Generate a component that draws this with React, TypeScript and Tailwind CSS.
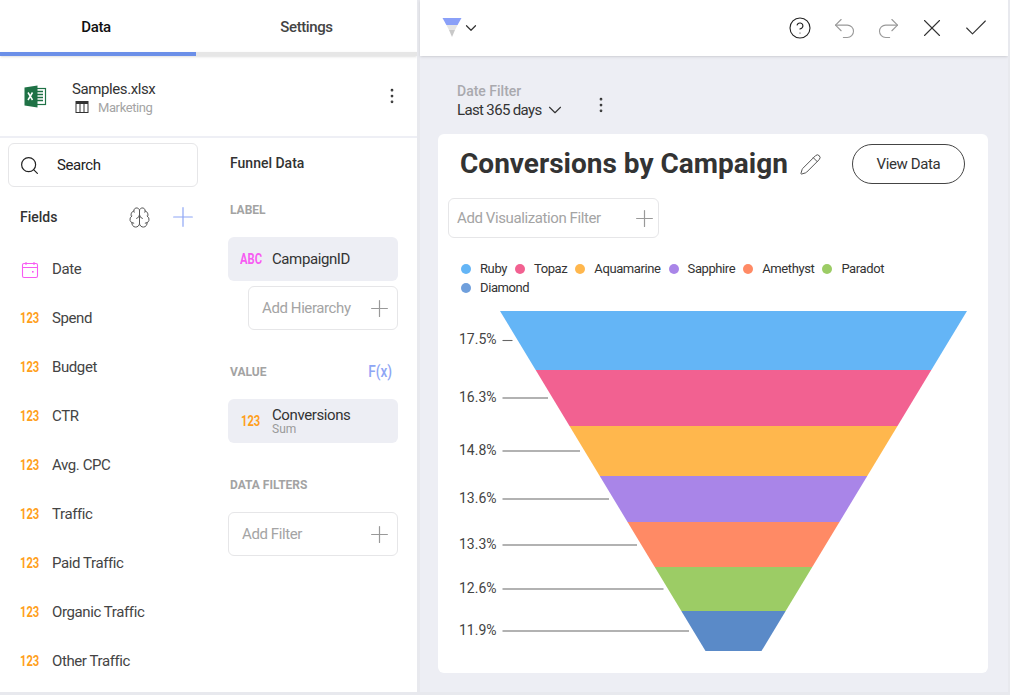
import React from "react";
import { Brain, Check, ChevronDown, CircleHelp, EllipsisVertical, Pencil, Plus, Redo2, Search, Undo2, X } from "lucide-react";

const fields = ["Spend", "Budget", "CTR", "Avg. CPC", "Traffic", "Paid Traffic", "Organic Traffic", "Other Traffic"];

const legend = [
  { name: "Ruby", color: "bg-[#64b5f6]" },
  { name: "Topaz", color: "bg-[#f26191]" },
  { name: "Aquamarine", color: "bg-[#ffb74d]" },
  { name: "Sapphire", color: "bg-[#a985e8]" },
  { name: "Amethyst", color: "bg-[#ff8a65]" },
  { name: "Paradot", color: "bg-[#9ccc65]" },
  { name: "Diamond", color: "bg-[#6f9fdc]" },
];

// chart coords are relative to the card (438,300)
const centerX = 295.5;
const slices = [
  { top: 11, bottom: 70, color: "#64b5f6", label: "17.5%", y: 40.5, end: 74.5 },
  { top: 70, bottom: 126, color: "#f26191", label: "16.3%", y: 98, end: 110 },
  { top: 126, bottom: 176, color: "#ffb74d", label: "14.8%", y: 151, end: 142 },
  { top: 176, bottom: 222, color: "#a985e8", label: "13.6%", y: 199, end: 171 },
  { top: 222, bottom: 267, color: "#ff8a65", label: "13.3%", y: 245, end: 199 },
  { top: 267, bottom: 311, color: "#9ccc65", label: "12.6%", y: 289, end: 225.5 },
  { top: 311, bottom: 351, color: "#5a8ac8", label: "11.9%", y: 331, end: 251 },
];
const halfAt = (y: number) => 233.5 - ((y - 11) * 205.5) / 340;

function Funnel() {
  return (
    <svg width="550" height="370" className="block" style={{ fontFamily: "Roboto, sans-serif" }}>
      {slices.map((s) => (
        <polygon
          key={s.label}
          fill={s.color}
          points={`${centerX - halfAt(s.top)},${s.top} ${centerX + halfAt(s.top)},${s.top} ${centerX + halfAt(s.bottom)},${s.bottom} ${centerX - halfAt(s.bottom)},${s.bottom}`}
        />
      ))}
      {slices.map((s) => (
        <g key={s.label}>
          <line x1="64.5" x2={s.end} y1={s.y} y2={s.y} stroke="#666" strokeWidth="1.1" />
          <text x="21" y={s.y + 3.5} fontSize="14" fill="#444">
            {s.label}
          </text>
        </g>
      ))}
    </svg>
  );
}

function ExcelIcon() {
  return (
    <svg width="24" height="24" viewBox="0 0 24 24" className="shrink-0">
      <rect x="10" y="4.5" width="12.5" height="16" fill="#fff" stroke="#1f7246" strokeWidth="1.2" />
      <path d="M13 7.5h7M13 10.5h7M13 13.5h7M13 16.5h7" stroke="#1f7246" strokeWidth="1.6" />
      <path d="M1.5 3.5 14.5 1.5v22l-13-2z" fill="#1f7246" />
      <path d="M5 8.5l4.5 7.5M9.5 8.5 5 16" stroke="#fff" strokeWidth="1.5" />
    </svg>
  );
}

function TableIcon() {
  return (
    <svg width="14" height="14" viewBox="0 0 14 14" fill="none" stroke="#333" strokeWidth="1">
      <rect x="1" y="1.5" width="12" height="11" />
      <path d="M1 3.5h12M5 1.5v11M9 1.5v11" />
      <path d="M1 2.5h12" />
    </svg>
  );
}

function FunnelIcon() {
  return (
    <svg width="20" height="22" viewBox="0 0 20 22">
      <polygon points="0.5,1 19.5,1 15.6,8 4.4,8" fill="#8aa0f8" />
      <polygon points="4.4,8 15.6,8 13,13 7,13" fill="#e4e4e4" />
      <polygon points="7,13 13,13 10,20" fill="#c8c8c8" />
    </svg>
  );
}

function DateIcon() {
  return (
    <svg width="18" height="18" viewBox="0 0 18 18" fill="none" stroke="#f75cf2" strokeWidth="1.1" className="mr-[13px]">
      <rect x="1.5" y="2.5" width="15" height="14" rx="1.5" />
      <path d="M1.5 6.5h15M5 1v3M13 1v3" />
      <rect x="11" y="10" width="1.6" height="1.6" fill="#f75cf2" stroke="none" />
    </svg>
  );
}

function AddBox({ label, className, plusClass }: { label: string; className: string; plusClass: string }) {
  return (
    <div className={`flex items-center justify-between border border-[#e6e6e8] rounded-md text-[15px] tracking-[-0.4px] text-[#a4a4a4] ${className}`}>
      <span>{label}</span>
      <Plus size={27} strokeWidth={1.2} absoluteStrokeWidth className={`text-[#999] ${plusClass}`} />
    </div>
  );
}

function SectionTitle({ children }: { children: React.ReactNode }) {
  return <div className="text-[12px] font-bold text-[#a3a3a3] leading-none ml-[2px]">{children}</div>;
}

function TypeTag({ children, color, width }: { children: React.ReactNode; color: string; width: string }) {
  return (
    <span className={`${width} shrink-0 tracking-normal`}>
      <span className={`inline-block origin-left scale-x-[0.8] text-[14px] font-bold ${color}`}>{children}</span>
    </span>
  );
}

function DataColumn() {
  return (
    <div className="w-[170px] shrink-0 ml-[20px]">
      <div className="text-[14px] font-medium text-[#333] leading-none ml-[2px] mt-[18px]">Funnel Data</div>
      <div className="mt-[34px]">
        <SectionTitle>LABEL</SectionTitle>
      </div>
      <div className="mt-[21px] h-[44px] bg-[#edeef4] rounded-md flex items-center pl-[12px] text-[15px] tracking-[-0.4px] text-[#333]">
        <TypeTag color="text-[#f75cf2]" width="w-[32px]">ABC</TypeTag>
        CampaignID
      </div>
      <AddBox label="Add Hierarchy" className="mt-[5px] ml-[20px] h-[44px] pl-[13px]" plusClass="mr-[4px]" />
      <div className="mt-[34px] flex items-center justify-between h-[16px]">
        <SectionTitle>VALUE</SectionTitle>
        <span className="inline-block origin-right scale-x-[0.85] text-[16px] font-medium text-[#8ea6f5] mr-[6px]">F(x)</span>
      </div>
      <div className="mt-[19px] h-[44px] bg-[#edeef4] rounded-md flex items-center pl-[13px] text-[#333]">
        <TypeTag color="text-[#ff9f1c]" width="w-[31px]">123</TypeTag>
        <div className="flex flex-col">
          <span className="text-[15px] tracking-[-0.4px] leading-[16px]">Conversions</span>
          <span className="text-[12px] leading-[13px] text-[#9a9a9a]">Sum</span>
        </div>
      </div>
      <div className="mt-[36px]">
        <SectionTitle>DATA FILTERS</SectionTitle>
      </div>
      <AddBox label="Add Filter" className="mt-[21px] h-[44px] pl-[13px]" plusClass="mr-[4px]" />
    </div>
  );
}

function FieldsColumn() {
  return (
    <div className="w-[208px] shrink-0">
      <div className="mx-[8px] mt-[5px] h-[44px] w-[190px] border border-[#e6e6e8] rounded-md flex items-center pl-[10px] text-[15px] tracking-[-0.4px] text-[#222]">
        <Search size={21} strokeWidth={1.2} absoluteStrokeWidth className="mr-[17px]" />
        Search
      </div>
      <div className="h-[60px] flex items-center pl-[20px] text-[14px] font-medium text-[#333]">
        <span className="flex-1">Fields</span>
        <Brain size={23} strokeWidth={1} absoluteStrokeWidth className="text-[#555] mr-[16px]" />
        <Plus size={32} strokeWidth={1.2} absoluteStrokeWidth className="text-[#8ea6f5] mr-[9px]" />
      </div>
      <div className="h-[49px] -mt-[2px] flex items-center pl-[21px] text-[15px] tracking-[-0.4px] text-[#444]">
        <DateIcon />
        Date
      </div>
      {fields.map((f) => (
        <div key={f} className="h-[49px] flex items-center pl-[20px] text-[15px] tracking-[-0.4px] text-[#444]">
          <TypeTag color="text-[#ff9f1c]" width="w-[32px]">123</TypeTag>
          {f}
        </div>
      ))}
    </div>
  );
}

function ToolSlot({ children }: { children: React.ReactNode }) {
  return <div className="w-[44px] flex justify-center">{children}</div>;
}

export default function App() {
  return (
    <div className="w-[1010px] h-[695px] bg-white overflow-hidden flex flex-col" style={{ fontFamily: "Roboto, sans-serif" }}>
      <div className="flex-1 flex min-h-0">
        <aside className="w-[417px] shrink-0 flex flex-col">
          <div className="flex h-[52px] text-[15px] tracking-[-0.4px]">
            <div className="w-[196px] flex items-center justify-center font-medium text-[#111] pt-[3px] pr-[4px]">Data</div>
            <div className="flex-1 flex items-center justify-center font-medium text-[#444] pt-[3px]">Settings</div>
          </div>
          <div className="flex h-[4px] bg-[#e6e6e6] shadow-sm">
            <div className="w-[196px] bg-[#6b8fe8]" />
          </div>
          <div className="h-[82px] border-b-2 border-[#eeeff5] flex items-center pl-[23px] pr-[15px]">
            <ExcelIcon />
            <div className="ml-[25px] flex-1 mt-[3px]">
              <div className="text-[15px] tracking-[-0.4px] leading-[19px] text-[#333]">Samples.xlsx</div>
              <div className="flex items-center text-[13px] tracking-[-0.4px] leading-[17px] text-[#a4a4a4]">
                <span className="ml-[3px] mr-[9px]">
                  <TableIcon />
                </span>
                Marketing
              </div>
            </div>
            <EllipsisVertical size={20} strokeWidth={1.3} className="text-[#333]" />
          </div>
          <div className="flex flex-1 min-h-0">
            <FieldsColumn />
            <DataColumn />
          </div>
        </aside>
        <div className="w-[3px] bg-[#e8e9ee]" />
        <main className="w-[588px] shrink-0 bg-[#edeef4] flex flex-col">
          <div className="h-[56px] bg-white shadow-sm flex items-center pl-[22px] pr-[10px]">
            <FunnelIcon />
            <ChevronDown size={18} strokeWidth={1.2} absoluteStrokeWidth className="text-[#333]" />
            <div className="flex-1" />
            <ToolSlot>
              <CircleHelp size={24} strokeWidth={1.1} absoluteStrokeWidth className="text-[#222]" />
            </ToolSlot>
            <ToolSlot>
              <Undo2 size={27} strokeWidth={1.1} absoluteStrokeWidth className="text-[#999]" />
            </ToolSlot>
            <ToolSlot>
              <Redo2 size={27} strokeWidth={1.1} absoluteStrokeWidth className="text-[#999]" />
            </ToolSlot>
            <ToolSlot>
              <X size={30} strokeWidth={1.1} absoluteStrokeWidth className="text-[#333]" />
            </ToolSlot>
            <ToolSlot>
              <Check size={28} strokeWidth={1.1} absoluteStrokeWidth className="text-[#333]" />
            </ToolSlot>
          </div>
          <div className="h-[78px] pl-[37px] pt-[27px] flex items-start">
            <div>
              <div className="text-[14px] leading-[16px] font-medium text-[#a9a9ae]">Date Filter</div>
              <div className="flex items-center text-[15px] tracking-[-0.65px] leading-[22px] text-[#333]">
                Last 365 days
                <ChevronDown size={22} strokeWidth={1.1} absoluteStrokeWidth className="ml-[2px]" />
              </div>
            </div>
            <EllipsisVertical size={20} strokeWidth={1.3} className="text-[#333] ml-[25px] mt-[12px]" />
          </div>
          <div className="ml-[18px] w-[550px] h-[539px] bg-white rounded-md">
            <div className="flex items-center h-[60px] pl-[22px]">
              <h1 className="text-[28px] font-bold text-[#333] leading-none">Conversions by Campaign</h1>
              <Pencil size={23} strokeWidth={1} absoluteStrokeWidth className="text-[#555] ml-[11px]" />
              <div className="ml-[30px] w-[113px] h-[40px] border border-[#444] rounded-full flex items-center justify-center text-[15px] tracking-[-0.4px] text-[#333]">
                View Data
              </div>
            </div>
            <AddBox label="Add Visualization Filter" className="ml-[10px] mt-[4px] w-[211px] h-[40px] pl-[8px]" plusClass="-mr-[0px]" />
            <div className="ml-[23px] mt-[21px] w-[470px] flex flex-wrap gap-x-[8px] text-[13px] tracking-[-0.4px] leading-[19px] text-[#333]">
              {legend.map((l) => (
                <div key={l.name} className="flex items-center gap-[9px]">
                  <span className={`w-[10px] h-[10px] rounded-full ${l.color}`} />
                  {l.name}
                </div>
              ))}
            </div>
            <div className="mt-[3px]">
              <Funnel />
            </div>
          </div>
        </main>
        <div className="flex-1 bg-[#e8e9ee]" />
      </div>
      <div className="h-[3px] bg-[#e8e9ee]" />
    </div>
  );
}
